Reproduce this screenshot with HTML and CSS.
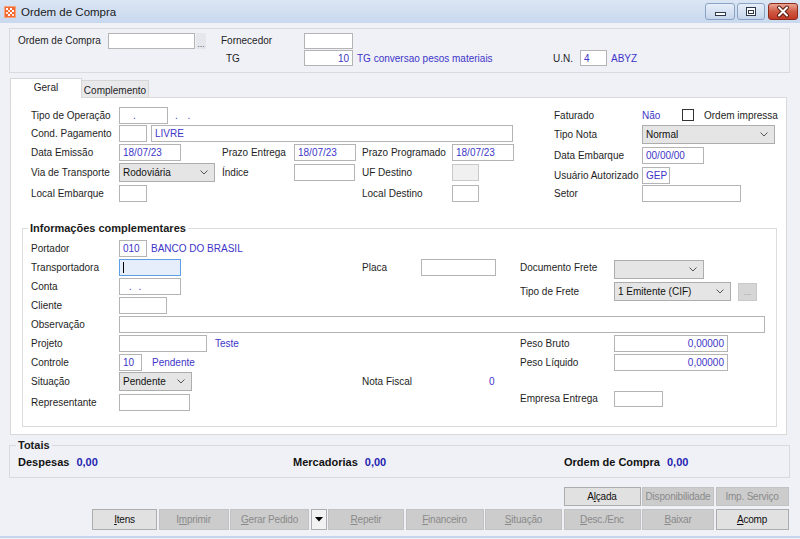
FILE: index.html
```html
<!DOCTYPE html>
<html lang="pt-BR">
<head>
<meta charset="utf-8">
<title>Ordem de Compra</title>
<link rel="stylesheet" href="styles.css">
</head>
<body>
<div class="window">
  <div class="titlebar">
    <svg class="appicon" width="12" height="12" viewBox="0 0 12 12">
      <rect x="0" y="0" width="12" height="12" fill="#f6a27a"/>
      <rect x="1" y="1" width="10" height="10" fill="#ef6a35"/>
      <rect x="2" y="2" width="2" height="2" fill="#fff"/>
      <rect x="6" y="2" width="2" height="2" fill="#fff"/>
      <rect x="4" y="4" width="2" height="2" fill="#fde0d2"/>
      <rect x="8" y="4" width="2" height="2" fill="#fff"/>
      <rect x="2" y="6" width="2" height="2" fill="#fde0d2"/>
      <rect x="6" y="6" width="2" height="2" fill="#fff"/>
      <rect x="4" y="8" width="2" height="2" fill="#fff"/>
      <rect x="8" y="8" width="2" height="2" fill="#fde0d2"/>
    </svg>
    <span class="title">Ordem de Compra</span>
    <div class="winbtns">
      <div class="wb wb-min">
        <svg width="28" height="15" viewBox="0 0 28 15"><rect x="9.5" y="8.5" width="10" height="3" fill="#fff" stroke="#2e3a4c"/></svg>
      </div>
      <div class="wb wb-max">
        <svg width="26" height="15" viewBox="0 0 26 15"><rect x="8.5" y="3.5" width="9" height="8" fill="#fff" stroke="#2e3a4c"/><rect x="10.5" y="6.5" width="5" height="3" fill="#fff" stroke="#2e3a4c"/></svg>
      </div>
      <div class="wb wb-close">
        <svg width="28" height="15" viewBox="0 0 28 15"><path d="M10 3.5 L18 11.5 M18 3.5 L10 11.5" stroke="#5b1b10" stroke-width="4" stroke-linecap="round"/><path d="M10 3.5 L18 11.5 M18 3.5 L10 11.5" stroke="#fff" stroke-width="2" stroke-linecap="round"/></svg>
      </div>
    </div>
  </div>

  <div class="topbox">
    <span class="lb">Ordem de Compra</span>
    <div class="cell"><div class="fld w87"></div><div class="dotbtn">...</div></div>
    <span class="lb">Fornecedor</span>
    <div class="fld w49"></div>
    <span class="lb c3 pl5">TG</span>
    <div class="fld w49 right blue">10</div>
    <span class="blue pl4">TG conversao pesos materiais</span>
    <span class="lb">U.N.</span>
    <div class="fld w27 blue">4</div>
    <span class="blue pl4">ABYZ</span>
  </div>

  <div class="tabs">
    <div class="tab tab-active">Geral</div>
    <div class="tab">Complemento</div>
  </div>

  <div class="panel">
    <div class="geral">
      <div class="gl">
        <span class="lb">Tipo de Operação</span>
        <div class="cell"><div class="fld w49 blue pl13">.</div><span class="blue dots-op">. .</span></div>

        <span class="lb c1">Cond. Pagamento</span>
        <div class="cell span-2-7"><div class="fld w28"></div><div class="fld w362 blue ml4">LIVRE</div></div>

        <span class="lb c1">Data Emissão</span>
        <div class="fld w62 blue">18/07/23</div>
        <span class="lb">Prazo Entrega</span>
        <div class="fld w62 blue">18/07/23</div>
        <span class="lb">Prazo Programado</span>
        <div class="fld w62 blue">18/07/23</div>

        <span class="lb c1">Via de Transporte</span>
        <div class="sel w96 h19"><span>Rodoviária</span><svg class="chev" width="8" height="5" viewBox="0 0 8 5"><path d="M0.5 0.5 L4 4 L7.5 0.5" fill="none" stroke="#555"/></svg></div>
        <span class="lb">Índice</span>
        <div class="fld w61"></div>
        <span class="lb">UF Destino</span>
        <div class="fld w27 disabled"></div>

        <span class="lb c1">Local Embarque</span>
        <div class="fld w28"></div>
        <span class="lb c5">Local Destino</span>
        <div class="fld w27"></div>
      </div>

      <div class="gr">
        <span class="lb">Faturado</span>
        <div class="cell"><span class="blue nao">Não</span><span class="chk"></span><span class="lb ml10">Ordem impressa</span></div>

        <span class="lb">Tipo Nota</span>
        <div class="sel w133 h19"><span>Normal</span><svg class="chev" width="8" height="5" viewBox="0 0 8 5"><path d="M0.5 0.5 L4 4 L7.5 0.5" fill="none" stroke="#555"/></svg></div>

        <span class="lb">Data Embarque</span>
        <div class="fld w62 blue">00/00/00</div>

        <span class="lb">Usuário Autorizado</span>
        <div class="fld w28 blue">GEP</div>

        <span class="lb">Setor</span>
        <div class="fld w99"></div>
      </div>
    </div>

    <fieldset class="info">
      <legend>Informações complementares</legend>
      <div class="ig">
        <span class="lb">Portador</span>
        <div class="cell"><div class="fld w28 blue">010</div><span class="blue ml4">BANCO DO BRASIL</span></div>

        <span class="lb c1">Transportadora</span>
        <div class="fld w62 focus"><span class="caret"></span></div>
        <span class="lb">Placa</span>
        <div class="fld w75"></div>
        <span class="lb">Documento Frete</span>
        <div class="sel w90 h19 down2"><span></span><svg class="chev" width="8" height="5" viewBox="0 0 8 5"><path d="M0.5 0.5 L4 4 L7.5 0.5" fill="none" stroke="#555"/></svg></div>

        <span class="lb c1">Conta</span>
        <div class="fld w62 blue dots-conta">. .</div>
        <span class="lb c5 down5">Tipo de Frete</span>
        <div class="cell down5"><div class="sel w117 h19"><span>1 Emitente (CIF)</span><svg class="chev" width="8" height="5" viewBox="0 0 8 5"><path d="M0.5 0.5 L4 4 L7.5 0.5" fill="none" stroke="#555"/></svg></div><div class="smallbtn">...</div></div>

        <span class="lb c1">Cliente</span>
        <div class="fld w48"></div>

        <span class="lb c1">Observação</span>
        <div class="fld w646 span-2-7"></div>

        <span class="lb c1">Projeto</span>
        <div class="cell"><div class="fld w88"></div><span class="blue ml8">Teste</span></div>
        <span class="lb c5">Peso Bruto</span>
        <div class="fld w114 right blue">0,00000</div>

        <span class="lb c1">Controle</span>
        <div class="cell"><div class="fld w23 blue">10</div><span class="blue ml10">Pendente</span></div>
        <span class="lb c5">Peso Líquido</span>
        <div class="fld w114 right blue">0,00000</div>

        <span class="lb c1">Situação</span>
        <div class="sel w73 h19"><span>Pendente</span><svg class="chev" width="8" height="5" viewBox="0 0 8 5"><path d="M0.5 0.5 L4 4 L7.5 0.5" fill="none" stroke="#555"/></svg></div>
        <span class="lb">Nota Fiscal</span>
        <span class="blue ml68">0</span>

        <span class="lb c1">Representante</span>
        <div class="fld w71"></div>
        <span class="lb c5 top16">Empresa Entrega</span>
        <div class="fld w49 h16 topal"></div>
      </div>
    </fieldset>
  </div>

  <fieldset class="totais">
    <legend>Totais</legend>
    <div class="tg">
      <div><b>Despesas</b><b class="tv">0,00</b></div>
      <div><b>Mercadorias</b><b class="tv">0,00</b></div>
      <div><b>Ordem de Compra</b><b class="tv">0,00</b></div>
    </div>
  </fieldset>

  <div class="buttons">
    <div class="btn en r1 bc8">A<u>l</u>çada</div>
    <div class="btn dis r1 bc9">Disponibilidade</div>
    <div class="btn dis r1 bc10">Imp. Serviço</div>

    <div class="btn en r2"><u>I</u>tens</div>
    <div class="btn dis r2">I<u>m</u>primir</div>
    <div class="btn dis r2"><u>G</u>erar Pedido</div>
    <div class="btn arrow r2"><svg width="8" height="5" viewBox="0 0 8 5"><path d="M0 0 L8 0 L4 4.5 Z" fill="#000"/></svg></div>
    <div class="btn dis r2"><u>R</u>epetir</div>
    <div class="btn dis r2"><u>F</u>inanceiro</div>
    <div class="btn dis r2"><u>S</u>ituação</div>
    <div class="btn dis r2"><u>D</u>esc./Enc</div>
    <div class="btn dis r2"><u>B</u>aixar</div>
    <div class="btn en r2"><u>A</u>comp</div>
  </div>

  <div class="bottomline"></div>
</div>
</body>
</html>
```

FILE: styles.css
```css
* { box-sizing: border-box; }
html, body { margin: 0; padding: 0; }
body {
  width: 800px;
  height: 539px;
  overflow: hidden;
  background: #f0f1f7;
  font-family: "Liberation Sans", Arial, sans-serif;
  font-size: 10px;
  color: #1e1e1e;
}
.window { width: 800px; height: 539px; display: flex; flex-direction: column; }

/* title bar */
.titlebar {
  height: 23px;
  display: flex;
  align-items: center;
  padding-left: 4px;
  background: linear-gradient(#dbe6f4, #c8d8ee);
}
.appicon { margin-right: 5px; margin-top: 1px; }
.title { font-size: 11.5px; color: #1b1b1b; }
.winbtns { margin-left: auto; display: flex; align-items: flex-start; height: 23px; padding-top: 3px; padding-right: 2px; }
.wb { height: 17px; border: 1px solid #8aa2c4; border-radius: 3px; background: linear-gradient(#e6eef9, #c6d6ec); display: flex; }
.wb-min { width: 30px; margin-right: 2px; }
.wb-max { width: 28px; margin-right: 3px; }
.wb-close { width: 30px; border-color: #8d2a1c; background: linear-gradient(#eaa796, #cf5a43 50%, #c23a26); }

/* shared */
.lb { white-space: nowrap; }
.blue { color: #3d35c8; white-space: nowrap; }
.cell { display: flex; align-items: center; }
.fld {
  height: 17px;
  background: #fff;
  border: 1px solid #b4b4b4;
  padding: 0 3px;
  display: flex;
  align-items: center;
  white-space: nowrap;
  overflow: hidden;
}
.fld.right { justify-content: flex-end; }
.fld.disabled { background: #f0f0f0; border-color: #c9c9c9; }
.fld.focus { background: #e6eefb; border-color: #5e9ee3; }
.caret { width: 1px; height: 11px; background: #000; }
.sel {
  background: #e5e5e5;
  border: 1px solid #adadad;
  display: flex;
  align-items: center;
  justify-content: space-between;
  padding: 0 6px 0 3px;
  color: #111;
  white-space: nowrap;
}
.h19 { height: 19px; }
.h16 { height: 16px; }
.chk { width: 12px; height: 12px; border: 1px solid #333; background: #fff; }
.dotbtn {
  width: 10px; height: 16px; margin-left: 1px;
  background: #e6e7ec; color: #555; font-size: 9px;
  display: flex; align-items: flex-end; justify-content: center; line-height: 10px;
}
.smallbtn {
  width: 19px; height: 18px; margin-left: 7px;
  background: #d6d6d6; border: 1px solid #c9c9c9; color: #9a9a9a;
  display: flex; align-items: center; justify-content: center; font-size: 9px;
}

.w23 { width: 23px; } .w27 { width: 27px; } .w28 { width: 28px; }
.w48 { width: 48px; } .w49 { width: 49px; } .w61 { width: 61px; } .w62 { width: 62px; }
.w71 { width: 71px; } .w73 { width: 73px; } .w75 { width: 75px; } .w87 { width: 87px; }
.w88 { width: 88px; } .w90 { width: 90px; } .w96 { width: 96px; } .w99 { width: 99px; }
.w114 { width: 114px; } .w117 { width: 117px; } .w133 { width: 133px; }
.w362 { width: 362px; } .w646 { width: 646px; }
.ml4 { margin-left: 4px; } .ml8 { margin-left: 8px; } .ml10 { margin-left: 10px; } .ml68 { margin-left: 68px; }
.pl4 { padding-left: 4px; } .pl5 { padding-left: 5px; } .pl13 { padding-left: 13px; }
.c1 { grid-column: 1; } .c3 { grid-column: 3; } .c5 { grid-column: 5; }
.span-2-7 { grid-column: 2 / 7; }
.dots-op { margin-left: 7px; word-spacing: 7px; }
.dots-conta { padding-left: 9px; word-spacing: 4px; }
.nao { width: 40px; }
.down5 { align-self: end; margin-bottom: -5px; height: 19px; display: flex; align-items: center; }
.down2 { align-self: end; margin-bottom: -2px; }
.top16 { align-self: start; line-height: 16px; }
.topal { align-self: start; }

/* top box */
.topbox {
  margin: 5px 0 0 9px;
  width: 781px;
  height: 45px;
  border: 1px solid #d9dadf;
  padding: 3px 0 0 8px;
  display: grid;
  grid-template-columns: 90px 113px 83px 49px 200px 27px 27px auto;
  grid-template-rows: 17px 18px;
  align-items: center;
}
.topbox .fld { height: 16px; }

/* tabs */
.tabs { margin: 5px 0 0 10px; height: 19px; display: flex; align-items: flex-end; }
.tab {
  height: 17px;
  padding-top: 4px;
  width: 67px;
  text-align: center;
  background: #e9e9ec;
  border: 1px solid #d6d6d6;
  border-bottom: none;
  border-left: none;
  color: #1e1e1e;
}
.tab-active {
  width: 72px;
  height: 20px;
  padding-top: 3px;
  margin-bottom: -1px;
  background: #fff;
  border-left: 1px solid #d6d6d6;
  position: relative;
  z-index: 1;
}

/* panel */
.panel {
  margin-left: 10px;
  width: 777px;
  height: 338px;
  background: #fff;
  border: 1px solid #d9d9d9;
  padding-top: 8px;
}
.geral { display: flex; }
.gl {
  margin-left: 20px;
  width: 523px;
  display: grid;
  grid-template-columns: 88px 103px 72px 68px 90px 102px;
  grid-template-rows: 18px 19px 19px 20px 22px;
  align-items: center;
}
.gr {
  width: 233px;
  display: grid;
  grid-template-columns: 88px auto;
  grid-template-rows: 18px 21px 21px 18px 18px;
  align-items: center;
}

fieldset { margin: 0; min-width: 0; }
legend {
  font-weight: bold;
  font-size: 11px;
  line-height: 14px;
  padding: 0 2px;
  color: #1a1a1a;
}
.info {
  margin: 17px 0 0 11px;
  width: 755px;
  border: 1px solid #dcdcdc;
  padding: 4px 0 12px 8px;
}
.info legend { margin-left: -3px; }
.ig {
  display: grid;
  grid-template-columns: 88px 243px 59px 99px 94px auto;
  grid-template-rows: repeat(8, 19px) 23px;
  align-items: center;
}

/* totals */
.totais {
  margin: 3px 0 0 9px;
  width: 781px;
  border: 1px solid #d9dadf;
  padding: 0 0 5px 8px;
}
.totais legend { margin-left: -2px; }
.tg {
  height: 20px;
  display: grid;
  grid-template-columns: 275px 271px auto;
  align-items: center;
  font-size: 11px;
}
.tg b { color: #111; }
.tg .tv { color: #2424b0; margin-left: 7px; }

/* buttons */
.buttons {
  margin: 9px 0 0 92px;
  display: grid;
  grid-template-columns: 65px 70px 79px 16px 76px 78px 77px 77px 72px 73px;
  grid-template-rows: 19px 21px;
  column-gap: 1.5px;
  row-gap: 3px;
}
.btn {
  display: flex;
  align-items: center;
  justify-content: center;
  font-size: 10px;
  letter-spacing: -0.2px;
  white-space: nowrap;
  border: 1px solid #adadad;
}
.btn.r1 { grid-row: 1; }
.btn.r2 { grid-row: 2; }
.btn.bc8 { grid-column: 8; }
.btn.bc9 { grid-column: 9; }
.btn.bc10 { grid-column: 10; }
.btn.en { background: #e1e1e1; color: #111; }
.btn.dis { background: #cccccc; color: #8a8a8a; border-color: #c2c2c2; }
.btn.arrow { background: #f2f2f2; border-color: #adadad; }
.btn u { text-decoration: underline; text-underline-offset: 1px; }

.bottomline { margin-top: 6px; height: 2px; background: #c6d6ee; }
```
